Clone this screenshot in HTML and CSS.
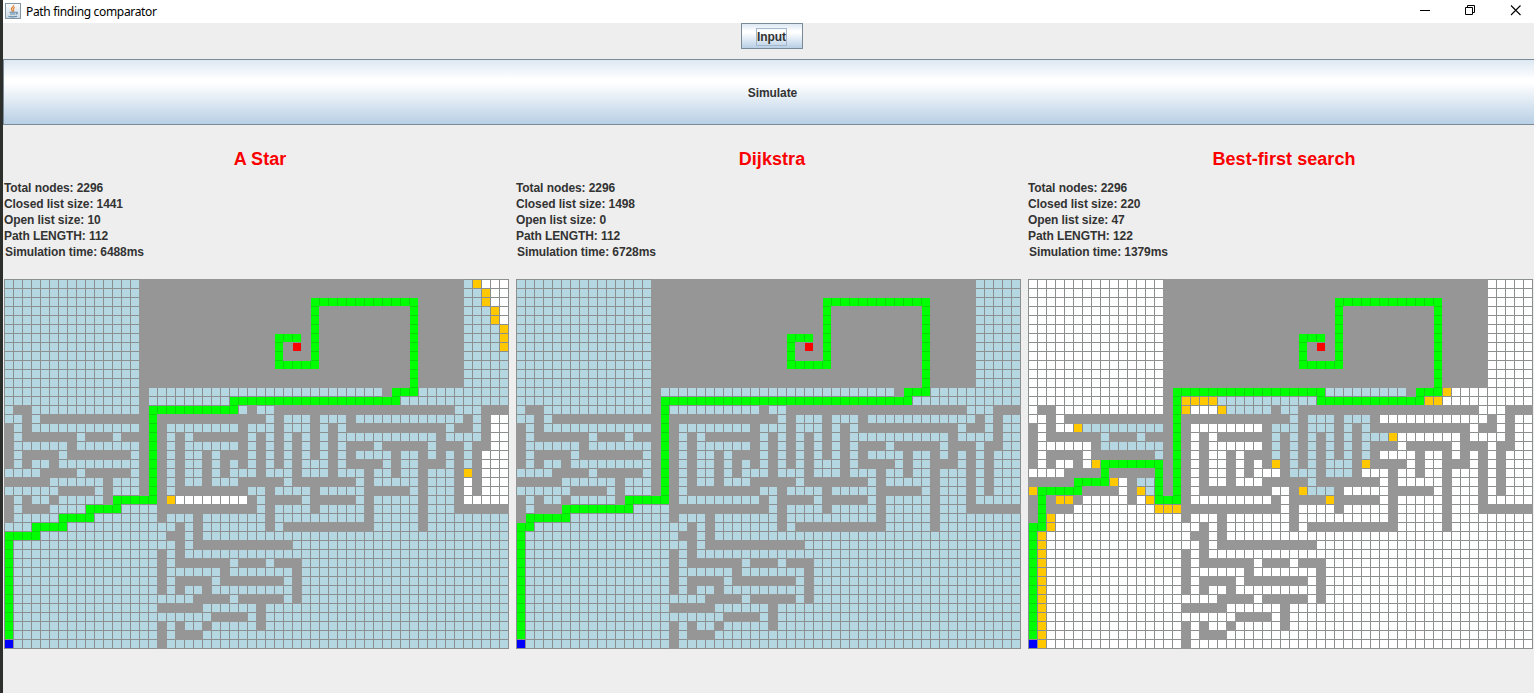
FILE: index.html
```html
<!DOCTYPE html>
<html lang="en">
<head>
<meta charset="utf-8">
<title>Path finding comparator</title>
<link rel="stylesheet" href="styles.css">
</head>
<body>
<div class="window">
  <header class="titlebar">
    <svg class="app-icon" width="16" height="16" viewBox="0 0 16 16">
      <defs><linearGradient id="ic" x1="0" y1="0" x2="0" y2="1"><stop offset="0" stop-color="#fbfcfd"/><stop offset="1" stop-color="#c9d7e2"/></linearGradient></defs>
      <rect x=".5" y=".5" width="15" height="15" fill="url(#ic)" stroke="#8396a5"/>
      <path d="M8.6 2C9.2 4 5.6 4.6 6.4 6.4L7.6 8.6M9.8 4.4C7.4 5.6 8.2 6.4 8.6 7.4L8.2 8.8" fill="none" stroke="#e2873a" stroke-width="1.2"/>
      <path d="M4.5 9.2h6.2M5 11h5.2M10.8 9.3c2-.6 2.2 1.3 0 1.800M3.4 13.2c2.6.9 6 .8 8.6 0" fill="none" stroke="#5f87a8" stroke-width="1.1"/>
    </svg>
    <span class="title">Path finding comparator</span>
    <svg class="controls" width="110" height="23" viewBox="0 0 110 23" fill="none" stroke="#000">
      <path d="M6 10.5h10"/>
      <path d="M51.500 7.500h7v7h-7zM53.500 7V5.500h7v7H59"/>
      <path d="M97 5.500l9.500 9.500M106.500 5.500L97 15" stroke-width="1.1"/>
    </svg>
  </header>
  <div class="toolbar"><button class="btn input-btn"><span class="focus">Input</span></button></div>
  <button class="btn simulate-btn">Simulate</button>
  <main class="panels">
    <section class="panel">
      <h2>A Star</h2>
      <div class="stats"><p>Total nodes: 2296</p><p>Closed list size: 1441</p><p>Open list size: 10</p><p>Path LENGTH: 112</p><p class="time">Simulation time: 6488ms</p></div>
      <canvas class="map" id="astar" width="505" height="370"></canvas>
    </section>
    <section class="panel">
      <h2>Dijkstra</h2>
      <div class="stats"><p>Total nodes: 2296</p><p>Closed list size: 1498</p><p>Open list size: 0</p><p>Path LENGTH: 112</p><p class="time">Simulation time: 6728ms</p></div>
      <canvas class="map" id="dijkstra" width="505" height="370"></canvas>
    </section>
    <section class="panel">
      <h2>Best-first search</h2>
      <div class="stats"><p>Total nodes: 2296</p><p>Closed list size: 220</p><p>Open list size: 47</p><p>Path LENGTH: 122</p><p class="time">Simulation time: 1379ms</p></div>
      <canvas class="map" id="best" width="505" height="370"></canvas>
    </section>
  </main>
</div>
<script src="app.js"></script>
</body>
</html>
```

FILE: styles.css
```css
* { box-sizing: border-box; }
body { margin: 0; width: 1534px; height: 693px; overflow: hidden; background: #eee; font-family: "Liberation Sans", Arial, sans-serif; }
.window { height: 693px; border-left: 3px solid #2d2f2d; display: flex; flex-direction: column; }
.titlebar { height: 23px; flex: none; background: #fff; display: flex; align-items: center; padding-left: 2px; }
.app-icon { margin-bottom: 1px; }
.title { font: 12px/23px "Noto Sans", sans-serif; color: #000; margin-left: 5px; flex: 1; letter-spacing: -0.33px; }
.controls { margin-right: 10px; }
.toolbar { height: 36px; flex: none; display: flex; justify-content: center; align-items: flex-start; padding-left: 3px; }
.btn { font: bold 12px/14px "Liberation Sans", Arial, sans-serif; letter-spacing: -0.08px; color: #333; border: 1px solid #7a8a99; border-radius: 0; padding: 0; background: linear-gradient(#dde8f3 0%, #fff 30%, #fff 36%, #b8cfe5 100%); }
.input-btn { width: 62px; height: 26px; margin-left: 3px; padding-top: 1px; }
.focus { display: inline-block; outline: 1px solid #a3b8cc; padding: 1px 0; }
.simulate-btn { height: 66px; flex: none; border-right: 0; padding: 2px 0 0 7px; }
.panels { display: flex; gap: 7px; padding: 22px 0 0 1px; }
.panel { width: 505px; flex: none; }
.panel h2 { margin: 0; width: 512px; height: 24px; text-align: center; font-size: 18px; line-height: 24px; letter-spacing: 0.06px; color: #fa0000; }
.stats { margin-top: 9px; height: 99px; font-weight: bold; font-size: 12px; line-height: 16px; letter-spacing: -0.08px; color: #333; }
.stats p { margin: 0; }
.stats .time { padding-left: 1px; }
.map { display: block; }
```

FILE: app.js
```js
const COLS = 56, ROWS = 41, CELL = 9;
const COLORS = { wall: '#969696', free: '#ffffff', closed: '#b4d7e2', open: '#ffc800', path: '#00ff00', start: '#0000fa', goal: '#fa0000', line: '#8c8f90' };

// Per row: comma separated columns or column ranges occupied by walls.
const WALLS = {
  12: '15,42', 13: '15',
  14: '1-2,15,27,30-49,53-55',
  15: '2,4-15,17-28,30,34,38,51,53',
  16: '0,2,15,17,26,30,34,36,38-48,50-51,53',
  17: '0,2-7,9-11,13-15,17,19,21-26,28,30,32,34,36,48,53',
  18: '0,7,15,17,19,26,28,30,32,34,36,38-40,42-46,48-50,52-53',
  19: '0,2-5,7-13,15,17,19,22,24-26,28,30,32,34,36,38,43,46,48,50,52',
  20: '0,2,5,15,17,19,22,24,26,28,30,32,36,38-41,43,46-48,50,52',
  21: '4-7,9-13,15,17,19,22,24,28,32,36,40,43,46,50,52',
  22: '0-4,11,15,17,19,22,26-30,32-38,40,46,50,52',
  23: '6-9,11,15,17,19-26,29,34,40-44,46,50,52',
  24: '0,2,5,11,17,27,29-32,34-38,40,46,50',
  25: '0,2-4,17-27,29,34,40,46,50-55',
  26: '0,17,21,29,40,46',
  27: '19,21,29,31-40,46',
  28: '18-19,21', 29: '19,21-31', 30: '17,19',
  31: '17,19-24,26-28,30-32', 32: '17,24,32',
  33: '17,19-22,24-30,32', 34: '17,19,22,32',
  35: '21-24,26-30,32', 36: '17-21,28', 37: '23-26,28',
  38: '17,19,22,28', 39: '17,19-21', 40: '17'
};
for (let r = 0; r < 12; r++) WALLS[r] = '15-50';

const GOAL_TAIL = [[45,12],[45,2],[34,2],[34,9],[30,9],[30,6],[32,6]];

const MAPS = {
  astar: {
    base: 'closed',
    free: { 0: '53-55', 1: '54-55', 2: '54-55', 3: '55', 4: '55', 15: '54-55', 16: '54-55', 17: '54-55', 18: '54-55', 19: '53-55', 20: '53-55', 21: '53-55', 22: '51,53-55', 23: '51,53-55', 24: '19-26,51-55' },
    open: { 0: '52', 1: '53', 2: '53', 3: '54', 4: '54', 5: '55', 6: '55', 7: '55', 21: '51', 24: '18' },
    path: [[0,39],[0,28],[3,28],[3,27],[6,27],[6,26],[9,26],[9,25],[12,25],[12,24],[16,24],[16,14],[25,14],[25,13],[43,13],[43,12],...GOAL_TAIL]
  },
  dijkstra: {
    base: 'closed', free: {}, open: {},
    path: [[0,39],[0,27],[1,27],[1,26],[5,26],[5,25],[12,25],[12,24],[16,24],[16,13],[43,13],[43,12],...GOAL_TAIL]
  },
  best: {
    base: 'free',
    closed: { 12: '33-41', 13: '21-31', 14: '22-26,28-29', 15: '29,31-33,35-37', 16: '6-14,27-29,31-33,35,37', 17: '8,12,27,29,31,33,35,37-39', 18: '8-14,27,29,31,33,35,37', 19: '14,27,29,31,33,35,37', 20: '29,31,33-35', 21: '29-31,33-35', 22: '12-13,31', 23: '13,31-33' },
    open: { 12: '46', 13: '17-20,44-45', 14: '17,21', 16: '5', 17: '40', 20: '7,27,37', 22: '9', 23: '0,12,30', 24: '3-4,13,33', 25: '14-16', 26: '2', 27: '2' },
    path: [[0,39],[0,27],[1,27],[1,23],[5,23],[5,22],[8,22],[8,20],[14,20],[14,24],[16,24],[16,12],[32,12],[32,13],[43,13],[43,12],...GOAL_TAIL]
  }
};
for (let r = 28; r <= 40; r++) MAPS.best.open[r] = '1';

function mark(grid, spec, kind) {
  for (const row in spec) {
    for (const part of spec[row].split(',')) {
      const [from, to = from] = part.split('-').map(Number);
      for (let c = from; c <= to; c++) grid[row][c] = kind;
    }
  }
}

function trace(grid, points) {
  for (let i = 1; i < points.length; i++) {
    let [x, y] = points[i - 1];
    const [tx, ty] = points[i];
    grid[y][x] = 'path';
    while (x !== tx || y !== ty) {
      x += Math.sign(tx - x);
      y += Math.sign(ty - y);
      grid[y][x] = 'path';
    }
  }
}

for (const id in MAPS) {
  const map = MAPS[id];
  const grid = Array.from({ length: ROWS }, () => Array(COLS).fill(map.base));
  mark(grid, map.free || {}, 'free');
  mark(grid, map.closed || {}, 'closed');
  mark(grid, WALLS, 'wall');
  mark(grid, map.open, 'open');
  trace(grid, map.path);
  grid[40][0] = 'start';
  grid[7][32] = 'goal';

  const ctx = document.getElementById(id).getContext('2d');
  ctx.fillStyle = COLORS.line;
  ctx.fillRect(0, 0, COLS * CELL + 1, ROWS * CELL + 1);
  grid.forEach((row, r) => row.forEach((kind, c) => {
    ctx.fillStyle = COLORS[kind];
    if (kind === 'wall') ctx.fillRect(c * CELL, r * CELL, CELL + 1, CELL + 1);
  }));
  grid.forEach((row, r) => row.forEach((kind, c) => {
    if (kind === 'wall') return;
    ctx.fillStyle = COLORS[kind];
    ctx.fillRect(c * CELL + 1, r * CELL + 1, CELL - 1, CELL - 1);
    if (kind === 'path') {
      ctx.fillStyle = '#0bd80b';
      if (c > 0 && row[c - 1] === 'path') ctx.fillRect(c * CELL, r * CELL + 1, 1, CELL - 1);
      if (r > 0 && grid[r - 1][c] === 'path') ctx.fillRect(c * CELL + 1, r * CELL, CELL - 1, 1);
    }
  }));
}
```
